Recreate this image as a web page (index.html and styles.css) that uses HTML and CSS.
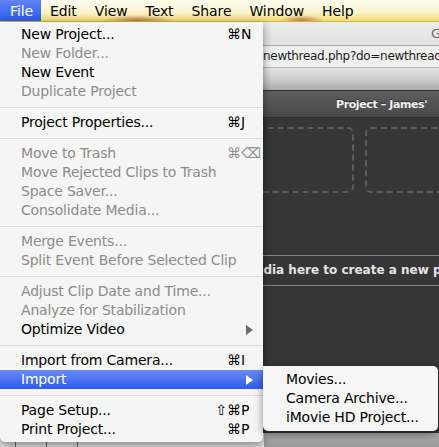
FILE: index.html
```html
<!DOCTYPE html>
<html>
<head>
<meta charset="utf-8">
<link rel="stylesheet" href="styles.css">
</head>
<body>
<div class="screen">
  <div class="menubar">
    <span class="mb-item first active">File</span>
    <span class="mb-item">Edit</span>
    <span class="mb-item">View</span>
    <span class="mb-item">Text</span>
    <span class="mb-item">Share</span>
    <span class="mb-item">Window</span>
    <span class="mb-item">Help</span>
  </div>

  <div class="window">
    <div class="toolbar"><span class="g">G</span></div>
    <div class="urlbar"><span class="url">newthread.php?do=newthread&amp;f=109</span></div>
    <div class="tabbar"></div>
    <div class="proj-head">Project – James'</div>
    <div class="content">
      <div class="boxes">
        <div class="box b1"></div>
        <div class="box b2"></div>
      </div>
      <div class="band">Drag media here to create a new project</div>
    </div>
    <div class="statusbar">
      <div class="sb-left"><i></i><i></i><i></i></div>
      <div class="sb-right"></div>
    </div>
  </div>

  <div class="menu">
    <div class="mi"><span class="lbl">New Project...</span><span class="mod"></span><span class="key">⌘N</span></div>
    <div class="mi dis"><span class="lbl">New Folder...</span></div>
    <div class="mi"><span class="lbl">New Event</span></div>
    <div class="mi dis"><span class="lbl">Duplicate Project</span></div>
    <div class="sep"></div>
    <div class="mi"><span class="lbl">Project Properties...</span><span class="mod"></span><span class="key">⌘J</span></div>
    <div class="sep"></div>
    <div class="mi dis"><span class="lbl">Move to Trash</span><span class="mod"></span><span class="key">⌘⌫</span></div>
    <div class="mi dis"><span class="lbl">Move Rejected Clips to Trash</span></div>
    <div class="mi dis"><span class="lbl">Space Saver...</span></div>
    <div class="mi dis"><span class="lbl">Consolidate Media...</span></div>
    <div class="sep"></div>
    <div class="mi dis"><span class="lbl">Merge Events...</span></div>
    <div class="mi dis"><span class="lbl">Split Event Before Selected Clip</span></div>
    <div class="sep"></div>
    <div class="mi dis"><span class="lbl">Adjust Clip Date and Time...</span></div>
    <div class="mi dis"><span class="lbl">Analyze for Stabilization</span></div>
    <div class="mi"><span class="lbl">Optimize Video</span><span class="mod"></span><span class="key"><span class="arrow"></span></span></div>
    <div class="sep"></div>
    <div class="mi"><span class="lbl">Import from Camera...</span><span class="mod"></span><span class="key">⌘I</span></div>
    <div class="mi hl"><span class="lbl">Import</span><span class="mod"></span><span class="key"><span class="arrow"></span></span></div>
    <div class="sep"></div>
    <div class="mi"><span class="lbl">Page Setup...</span><span class="mod">⇧</span><span class="key">⌘P</span></div>
    <div class="mi"><span class="lbl">Print Project...</span><span class="mod"></span><span class="key">⌘P</span></div>
  </div>

  <div class="submenu">
    <div class="si">Movies...</div>
    <div class="si">Camera Archive...</div>
    <div class="si">iMovie HD Project...</div>
  </div>
</div>
</body>
</html>
```

FILE: styles.css
```css
html, body {
  margin: 0;
  padding: 0;
}
body {
  width: 439px;
  height: 447px;
  overflow: hidden;
  font-family: "DejaVu Sans", sans-serif;
}
.screen {
  position: relative;
  width: 439px;
  height: 447px;
  overflow: hidden;
  display: flex;
  flex-direction: column;
}

/* menubar */
.menubar {
  display: flex;
  height: 21px;
  flex: none;
  border-bottom: 1px solid #d6b63c;
  background:
    radial-gradient(ellipse 36px 6px at 137px 21px, rgba(140, 35, 25, 0.55), rgba(140, 35, 25, 0)),
    radial-gradient(ellipse 22px 6px at 302px 21px, rgba(140, 35, 25, 0.55), rgba(140, 35, 25, 0)),
    linear-gradient(#fefcee, #faf3cc 60%, #f0da72);
  font-size: 14px;
  letter-spacing: -0.1px;
  color: #000;
}
.mb-item {
  padding: 2px 9px 0;
  line-height: 19px;
  white-space: nowrap;
}
.mb-item.first {
  padding-left: 10px;
  padding-right: 8px;
}
.mb-item.active {
  background: linear-gradient(#6285f4, #2a5bec);
  color: #fff;
}

/* background window */
.window {
  flex: 1;
  display: flex;
  flex-direction: column;
  overflow: hidden;
}
.toolbar {
  height: 23px;
  flex: none;
  border-bottom: 1px solid #ababab;
  background: linear-gradient(#ececec, #e2e2e2);
  display: flex;
  justify-content: flex-end;
  align-items: center;
}
.g {
  font-size: 13px;
  color: #6a6a6a;
  margin-right: -2px;
}
.urlbar {
  height: 21px;
  flex: none;
  border-bottom: 1px solid #b4b4b4;
  background: #efefef;
  white-space: nowrap;
  overflow: hidden;
}
.url {
  display: block;
  padding-left: 263px;
  font-size: 12px;
  letter-spacing: -0.3px;
  line-height: 21px;
  color: #1c1c1c;
}
.tabbar {
  height: 22px;
  flex: none;
  border-bottom: 1px solid #2e2e2e;
  background: linear-gradient(#e4e4e4, #c8c8c8 60%, #aaaaaa);
}
.proj-head {
  height: 26px;
  flex: none;
  border-bottom: 1px solid #2a2a2a;
  background: linear-gradient(#5e5e5e, #484848);
  padding-left: 336px;
  font-size: 11px;
  font-weight: bold;
  letter-spacing: -0.4px;
  line-height: 28px;
  color: #f2f2f2;
  white-space: nowrap;
  text-shadow: 0 -1px 0 #2a2a2a;
}
.content {
  flex: 1;
  background: #363636;
  display: flex;
  flex-direction: column;
  overflow: hidden;
}
.boxes {
  display: flex;
  gap: 11px;
  margin-top: 9px;
  padding-left: 192px;
}
.box {
  flex: none;
  height: 62px;
  border: 2px dashed #5e5e5e;
  border-radius: 6px;
}
.b1 { width: 158px; }
.b2 { width: 140px; }
.band {
  margin-top: 62px;
  height: 29px;
  border-top: 1px solid #858585;
  border-bottom: 1px solid #858585;
  padding-left: 206px;
  font-size: 12px;
  font-weight: bold;
  line-height: 29px;
  color: #e4e4e4;
  white-space: nowrap;
}
.statusbar {
  height: 14px;
  flex: none;
  display: flex;
}
.sb-left {
  width: 264px;
  background: #e4e4e4;
  display: flex;
  gap: 30px;
  padding-left: 15px;
  box-sizing: border-box;
}
.sb-left i {
  width: 1px;
  background: #666;
}
.sb-right {
  flex: 1;
  background: linear-gradient(#adadad, #999999);
}

/* File menu */
.menu {
  position: absolute;
  left: 0;
  top: 22px;
  width: 263px;
  padding: 3px 0;
  background: #f5f5f5;
  border-radius: 0 0 5px 5px;
  box-shadow: 0 3px 10px rgba(0, 0, 0, 0.45);
  font-size: 14px;
  line-height: 19px;
  color: #000;
}
.mi {
  display: grid;
  grid-template-columns: 1fr auto 36px;
  height: 19px;
  padding-left: 21px;
  white-space: nowrap;
}
.lbl {
  letter-spacing: -0.2px;
}
.mi.dis {
  color: #8c8c8c;
}
.mod {
  text-align: right;
}
.key {
  display: flex;
  align-items: center;
}
.arrow {
  display: block;
  width: 0;
  height: 0;
  margin-left: 19px;
  border-left: 7px solid #6a6a6a;
  border-top: 5px solid transparent;
  border-bottom: 5px solid transparent;
}
.mi.hl {
  background: linear-gradient(#6a8bf5, #2c5cf0);
  color: #fff;
}
.mi.hl .arrow {
  border-left-color: #fff;
}
.sep {
  height: 1px;
  margin: 6px 0 5px;
  background: #dadada;
}

/* Import submenu */
.submenu {
  position: absolute;
  left: 263px;
  top: 366px;
  width: 175px;
  padding: 4px 0;
  background: #f6f6f6;
  border-radius: 0 5px 5px 5px;
  box-shadow: 0 3px 9px rgba(0, 0, 0, 0.45);
  font-size: 14px;
  line-height: 19px;
  letter-spacing: -0.2px;
  color: #000;
}
.si {
  height: 19px;
  padding-left: 23px;
  white-space: nowrap;
}
```
